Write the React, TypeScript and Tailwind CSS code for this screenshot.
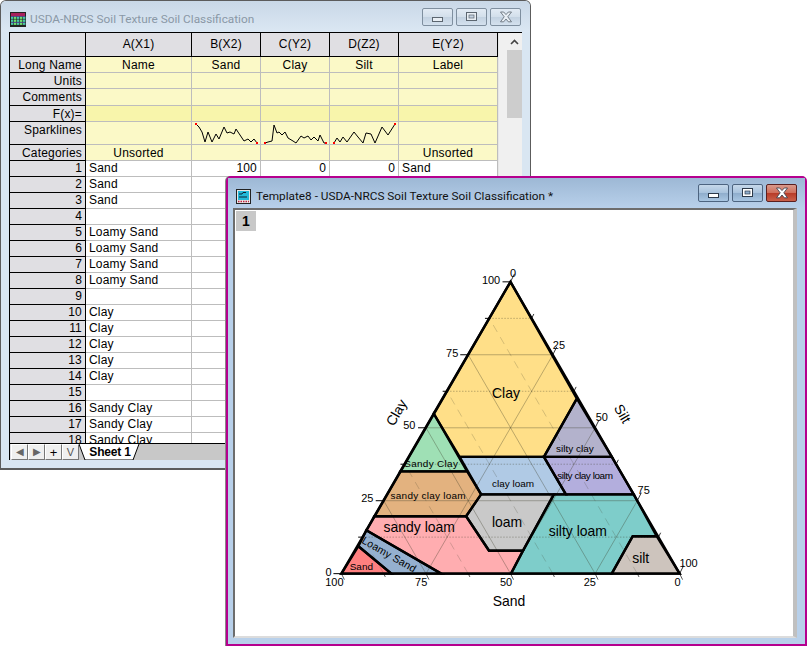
const L = [341, 573.5]
const R = [680, 573.5]
const T = [510.5, 281]

const mix = (a: number[], b: number[], t: number) => [a[0] + (b[0] - a[0]) * t, a[1] + (b[1] - a[1]) * t]
const gridPath = (pairs: number[][][]) =>
  pairs.map(([a, b]) => `M${a[0].toFixed(1)} ${a[1].toFixed(1)}L${b[0].toFixed(1)} ${b[1].toFixed(1)}`).join('')

const major = [0.25, 0.5, 0.75]
const minor = [0.125, 0.375, 0.625, 0.875]

const regions = [
  { fill: '#ffdf88', pts: '510.5,281 577,398 544,456.5 459.5,456.5 433.5,413' },
  { fill: '#b3b2cc', pts: '577,398 612,456.5 544,456.5' },
  { fill: '#9fe0b5', pts: '433.5,413 467,471 400,471' },
  { fill: '#b0cae5', pts: '459.5,456.5 544,456.5 566,494 481,494' },
  { fill: '#b3aedd', pts: '544,456.5 612,456.5 634,494 566,494' },
  { fill: '#e3b27f', pts: '400,471 467,471 481,494 466,516 374,516' },
  { fill: '#c9c9c9', pts: '481,494 554,494 523,550.5 489,550.5 466,516' },
  { fill: '#ffadb0', pts: '374,516 466,516 489,550.5 523,550.5 511,573.5 441,573.5 366,530' },
  { fill: '#95b0cf', pts: '366,530 441,573.5 391,573.5 358,546' },
  { fill: '#ff8080', pts: '358,546 391,573.5 341,573.5' },
  { fill: '#7ecdca', pts: '554,494 634,494 657,536 633,536 612,573.5 511,573.5 523,550.5' },
  { fill: '#cdc4bd', pts: '633,536 657,536 680,573.5 612,573.5' },
]

const axisLabels = [
  { t: '100', x: 491, y: 283 },
  { t: '75', x: 452, y: 356 },
  { t: '50', x: 409, y: 429 },
  { t: '25', x: 367, y: 502 },
  { t: '0', x: 328, y: 576 },
  { t: '100', x: 334, y: 586 },
  { t: '75', x: 421, y: 586 },
  { t: '50', x: 506, y: 586 },
  { t: '25', x: 590, y: 586 },
  { t: '0', x: 678, y: 586 },
  { t: '0', x: 513, y: 276 },
  { t: '25', x: 559, y: 348 },
  { t: '50', x: 602, y: 421 },
  { t: '75', x: 644, y: 494 },
  { t: '100', x: 689, y: 567 },
]

const regionLabels = [
  { t: 'Clay', x: 506, y: 397, s: 14 },
  { t: 'silty clay', x: 575, y: 452, s: 10 },
  { t: 'silty clay loam', x: 585, y: 479, s: 10, ls: -0.45 },
  { t: 'Sandy Clay', x: 431, y: 467, s: 10, ls: 0.3 },
  { t: 'clay loam', x: 513, y: 487, s: 10 },
  { t: 'sandy clay loam', x: 428, y: 499, s: 10, ls: 0.25 },
  { t: 'sandy loam', x: 419, y: 532, s: 14 },
  { t: 'loam', x: 507, y: 527, s: 14 },
  { t: 'silty loam', x: 578, y: 536, s: 14 },
  { t: 'silt', x: 641, y: 563, s: 14 },
  { t: 'Sand', x: 361, y: 570, s: 10 },
]

function TernaryChart() {
  const horizontal = (h: number) => [mix(L, T, h), mix(R, T, h)]
  const slash = (f: number) => [mix(L, R, f), mix(T, R, f)]
  const back = (f: number) => [mix(L, R, f), mix(L, T, f)]

  const ticks = (a: number[], b: number[], dx: number, dy: number) => [
    ...[0, 0.25, 0.5, 0.75, 1].map((f) => {
      const p = mix(a, b, f)
      return [p, [p[0] + dx, p[1] + dy]]
    }),
    ...minor.map((f) => {
      const p = mix(a, b, f)
      return [p, [p[0] + dx * 0.55, p[1] + dy * 0.55]]
    }),
  ]

  return (
    <svg viewBox="235 209 558 427" className="block w-full h-full">
      {regions.map((r) => (
        <polygon key={r.pts} points={r.pts} fill={r.fill} />
      ))}
      <path d={gridPath(major.flatMap((f) => [horizontal(f), slash(f), back(f)]))} stroke="#3c3c28" strokeOpacity="0.35" fill="none" />
      <path d={gridPath(minor.map(horizontal))} stroke="#3c3c28" strokeOpacity="0.35" strokeDasharray="1.5 1.5" fill="none" />
      <path d={gridPath(minor.map(back))} stroke="#3c3c28" strokeOpacity="0.22" strokeDasharray="8 6" fill="none" />
      <path d={gridPath(ticks(L, T, -8, 0))} stroke="#000" fill="none" />
      <path d={gridPath(ticks(L, R, 3, 6))} stroke="#555" fill="none" />
      <path d={gridPath(ticks(T, R, 4, -8))} stroke="#333" fill="none" />
      {regions.map((r) => (
        <polygon key={r.pts} points={r.pts} fill="none" stroke="#000" strokeWidth="2.4" strokeLinejoin="miter" />
      ))}
      <polygon points={`${L} ${R} ${T}`} fill="none" stroke="#000" strokeWidth="2.4" />
      <g fontSize="11" textAnchor="middle" fill="#000">
        {axisLabels.map((a) => (
          <text key={a.x + a.t} x={a.x} y={a.y}>{a.t}</text>
        ))}
      </g>
      <g textAnchor="middle" fill="#000">
        {regionLabels.map((r) => (
          <text key={r.t} x={r.x} y={r.y} fontSize={r.s} letterSpacing={r.ls}>{r.t}</text>
        ))}
        <text transform="translate(389 554) rotate(30)" y="4" fontSize="10.5" letterSpacing="0.2">Loamy Sand</text>
        <text transform="translate(396 412) rotate(-60)" y="5" fontSize="14">Clay</text>
        <text transform="translate(623 413) rotate(60)" y="5" fontSize="14">Silt</text>
        <text x="509" y="606" fontSize="14">Sand</text>
      </g>
    </svg>
  )
}

function WinButton({ kind, active, close }: { kind: 'min' | 'max' | 'close'; active?: boolean; close?: boolean }) {
  const bg = close
    ? 'bg-[linear-gradient(#d99a8c_0%,#cf6f5c_48%,#b83c28_52%,#c9604a_100%)] border-[#5a1f1f]'
    : active
      ? 'bg-[linear-gradient(#c6d8ea_0%,#a9c3dd_48%,#8fadcc_52%,#a9c6e2_100%)] border-[#4d6480]'
      : 'bg-[linear-gradient(#e2ebf4_0%,#d3dfeb_48%,#c3d2e1_52%,#d4e1ee_100%)] border-[#7f8f9f]'
  const glyph = active ? '#fff' : '#e8eef4'
  const edge = active ? '#2d3a4a' : '#5c6670'
  return (
    <div className={`w-[31px] h-[18px] rounded-[2px] border flex items-center justify-center ${bg}`}>
      <svg width="16" height="12" viewBox="0 0 16 12">
        {kind === 'min' && <rect x="2.5" y="6.5" width="10" height="4" fill={glyph} stroke={edge} />}
        {kind === 'max' && (
          <>
            <rect x="2.5" y="1.5" width="10" height="8" fill={glyph} stroke={edge} />
            <rect x="5" y="4" width="5" height="3" fill={active ? '#8fadcc' : '#c3d2e1'} stroke={edge} strokeWidth="0.7" />
          </>
        )}
        {kind === 'close' && (
          <path d="M2.5 1h3.2L8 3.6 10.3 1h3.2L9.8 5.8l3.7 5h-3.2L8 8 5.7 10.8H2.5l3.7-5z" fill={glyph} stroke={edge} strokeWidth="0.8" />
        )}
      </svg>
    </div>
  )
}

function SheetIcon() {
  return (
    <svg width="16" height="15" viewBox="0 0 16 15" className="shrink-0">
      <rect width="16" height="15" fill="#222" />
      <rect x="1" y="1" width="14" height="3" fill="#a8205c" />
      {[4.5, 7.5, 10.5].flatMap((y) =>
        [1, 4, 7, 10, 13].map((x, i) => (
          <rect key={`${x}-${y}`} x={x} y={y} width="2.4" height="2.4" fill={i % 2 ? '#6fe06f' : '#49c6a8'} />
        )),
      )}
      <rect x="1" y="4" width="14" height="0.6" fill="#5b3fb0" />
      <rect x="1" y="10" width="14" height="0.6" fill="#5b3fb0" />
    </svg>
  )
}

function GraphIcon() {
  return (
    <svg width="15" height="15" viewBox="0 0 15 15" className="shrink-0">
      <rect x="0.5" y="0.5" width="14" height="14" fill="#e8e8e8" stroke="#222" />
      <rect x="2" y="2" width="11" height="9" fill="#25b8d8" />
      <path d="M3 5h3l1-1.5h3M3 8h8" stroke="#123" fill="none" />
      <path d="M2 12.5h11" stroke="#c0203c" strokeWidth="1.5" strokeDasharray="1.5 1" />
    </svg>
  )
}

function Sparkline({ x, pts }: { x: number; pts: string }) {
  const all = pts.split(' ')
  const [x0, y0] = all[0].split(',')
  const [x1, y1] = all[all.length - 1].split(',')
  return (
    <svg viewBox={`${x} 122 68 22`} className="block w-[68px] h-[22px] overflow-visible">
      <polyline points={pts} fill="none" stroke="#000" />
      <rect x={+x0 - 1} y={+y0 - 1} width="2" height="2" fill="#f00" />
      <rect x={+x1 - 1} y={+y1 - 1} width="2" height="2" fill="#f00" />
    </svg>
  )
}

const sparkB = '196,124 199,127 202,132 205,142 208,132 212,142 216,134 219,139 224,127 227,133 230,132 234,134 236,129 240,135 244,141 248,139 251,142 254,139 257,143'
const sparkC = '265,143 268,142 272,141 274,125 277,133 279,132 282,135 285,132 288,138 293,141 296,143 301,136 304,138 308,136 311,140 314,137 318,141 320,135 324,143 326,143'
const sparkD = '334,143 337,138 340,142 343,137 347,142 354,132 358,137 363,143 366,133 371,134 375,143 382,127 388,135 395,124'

const cols = 'grid grid-cols-[76px_106px_69px_69px_69px_99px] grid-rows-[minmax(0,1fr)]'
const headCell = 'bg-[#e0dfe3] border-r border-b border-black'
const labelCell = `${headCell} text-right pr-[3px]`
const names = ['Sand', 'Sand', 'Sand', '', 'Loamy Sand', 'Loamy Sand', 'Loamy Sand', 'Loamy Sand', '', 'Clay', 'Clay', 'Clay', 'Clay', 'Clay', '', 'Sandy Clay', 'Sandy Clay', 'Sandy Clay']

function MetaRow({ label, cells, h, bg = 'bg-[#fbf9c7]' }: { label: string; cells: React.ReactNode[]; h: string; bg?: string }) {
  return (
    <div className={`${cols} ${h}`}>
      <div className={labelCell}>{label}</div>
      {cells.map((c, i) => (
        <div key={i} className={`${bg} border-r border-b border-[#bdbdbd] text-center`}>{c}</div>
      ))}
    </div>
  )
}

function Worksheet() {
  return (
    <div className="absolute left-0 top-0 w-[531px] h-[470px] flex flex-col bg-[#d9e6f2] border border-[#5c5c5c] border-b-2 rounded-t-[6px] overflow-hidden">
      <div className="h-[31px] shrink-0 flex items-center pl-[9px] pr-[9px] pt-[6px] bg-[linear-gradient(#c9d8e7,#dbe7f3)]">
        <SheetIcon />
        <span className="ml-[4px] text-[11.8px] text-[#8a98a6] font-['Roboto',sans-serif] whitespace-nowrap">USDA-NRCS Soil Texture Soil Classification</span>
        <div className="ml-auto flex gap-[3px] -mt-[5px]">
          <WinButton kind="min" />
          <WinButton kind="max" />
          <WinButton kind="close" />
        </div>
      </div>
      <div className="mx-[8px] flex-1 min-h-0 flex bg-white border-t border-l border-black">
        <div className="w-[488px] flex flex-col">
          <div className="flex-1 min-h-0 overflow-hidden text-[12px] leading-[15px] tracking-[0.2px] text-black">
            <div className={`${cols} h-[24px] leading-[23px] text-center`}>
              <div className={headCell} />
              {['A(X1)', 'B(X2)', 'C(Y2)', 'D(Z2)', 'E(Y2)'].map((c) => (
                <div key={c} className={headCell}>{c}</div>
              ))}
            </div>
            <div className="leading-[17px]">
              <MetaRow label="Long Name" h="h-[16px]" cells={['Name', 'Sand', 'Clay', 'Silt', 'Label']} />
              <MetaRow label="Units" h="h-[16px]" cells={['', '', '', '', '']} />
              <MetaRow label="Comments" h="h-[17px]" cells={['', '', '', '', '']} />
              <MetaRow label="F(x)=" h="h-[16px]" bg="bg-[#f8f5ab]" cells={['', '', '', '', '']} />
              <MetaRow
                label="Sparklines"
                h="h-[23px]"
                cells={['', <Sparkline x={192} pts={sparkB} />, <Sparkline x={261} pts={sparkC} />, <Sparkline x={330} pts={sparkD} />, '']}
              />
              <MetaRow label="Categories" h="h-[16px]" cells={['Unsorted', '', '', '', 'Unsorted']} />
            </div>
            {names.map((name, i) => (
              <div key={i} className={`${cols} h-[16px]`}>
                <div className={labelCell}>{i + 1}</div>
                <div className="pl-[3px] border-r border-b border-[#bdbdbd]">{name}</div>
                <div className="pr-[3px] text-right border-r border-b border-[#bdbdbd]">{i === 0 ? 100 : ''}</div>
                <div className="pr-[3px] text-right border-r border-b border-[#bdbdbd]">{i === 0 ? 0 : ''}</div>
                <div className="pr-[3px] text-right border-r border-b border-[#bdbdbd]">{i === 0 ? 0 : ''}</div>
                <div className="pl-[3px] border-r border-b border-[#bdbdbd]">{i === 0 ? 'Sand' : ''}</div>
              </div>
            ))}
          </div>
          <div className="h-[17px] shrink-0 flex items-stretch bg-[#c8c8c8] border-t border-black">
            <div className="flex pl-[1px] bg-[#e0dfe3]">
              {['◀', '▶', '+', 'V'].map((g) => (
                <div key={g} className={`w-[17px] flex items-center justify-center bg-[#efefef] border border-t-white border-l-white border-r-[#777] border-b-[#777] leading-none ${g === '+' ? 'text-black text-[13px]' : g === 'V' ? 'text-[#555] text-[11px]' : 'text-[#666] text-[10px]'}`}>{g}</div>
              ))}
            </div>
            <svg width="62" height="16" viewBox="0 0 62 16" className="shrink-0">
              <path d="M0 0 L6 16 H54 L60 0 Z" fill="#fff" />
              <path d="M0 0 L6 16 H54 L60 0" fill="none" stroke="#000" />
              <text x="31" y="12" textAnchor="middle" fontSize="12" fontWeight="700" letterSpacing="-0.2" fill="#000">Sheet 1</text>
            </svg>
          </div>
        </div>
        <div className="w-[25px] bg-[#f0f0f0] pl-[8px] border-l border-[#e6e6e6]">
          <div className="h-[17px] flex items-center justify-center">
            <svg width="9" height="6" viewBox="0 0 9 6"><path d="M1 5l3.5-3.5L8 5" stroke="#444" strokeWidth="1.6" fill="none" /></svg>
          </div>
          <div className="w-[15px] h-[68px] bg-[#cdcdcd]" />
        </div>
      </div>
      <div className="h-[8px] shrink-0" />
    </div>
  )
}

function GraphWindow() {
  return (
    <div className="absolute left-[226px] top-[176px] w-[581px] h-[470px] flex flex-col bg-[#b8d0ea] border-2 border-[#b5008e] rounded-t-[5px] shadow-[-1px_0_0_#8a8a8a]">
      <div className="h-[30px] shrink-0 flex items-center pl-[8px] pr-[8px] bg-[linear-gradient(#9db8d5,#b8d0ea)]">
        <div className="flex items-center mt-[7px]">
          <GraphIcon />
          <span className="ml-[5px] text-[11.8px] text-[#111] font-['Roboto',sans-serif] whitespace-nowrap">Template8 - USDA-NRCS Soil Texture Soil Classification *</span>
        </div>
        <div className="ml-auto flex gap-[3px]">
          <WinButton kind="min" active />
          <WinButton kind="max" active />
          <WinButton kind="close" active close />
        </div>
      </div>
      <div className="relative ml-[5px] mr-[8px] mb-[6px] flex-1 min-h-0 bg-white border-t-2 border-l-2 border-t-[#6d6d6d] border-l-[#6d6d6d] border-r-[4px] border-b-2 border-r-[#c0c0c0] border-b-[#dcdcdc]">
        <TernaryChart />
        <div className="absolute left-px top-px w-[20px] h-[20px] flex items-center justify-center bg-[#c8c8c8] text-[14px] font-bold text-black">1</div>
      </div>
    </div>
  )
}

export default function App() {
  return (
    <div className="relative w-[807px] h-[646px] overflow-hidden bg-white font-['Liberation_Sans',Arial,sans-serif]">
      <Worksheet />
      <GraphWindow />
    </div>
  )
}
